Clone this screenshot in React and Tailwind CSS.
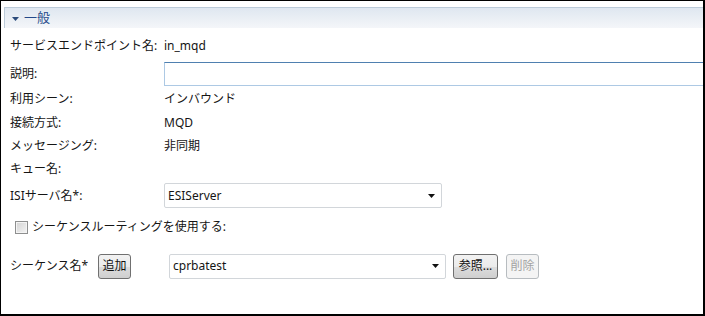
const font = { fontFamily: '"Noto Sans", "Noto Sans CJK JP", sans-serif' };

function Arrow() {
  return (
    <svg width="7" height="4" viewBox="0 0 7 4" className="shrink-0">
      <path d="M0 0h7L3.5 4z" fill="#111" />
    </svg>
  );
}

function Combo({ value, className }) {
  return (
    <div className={`flex items-center justify-between rounded-[2px] border border-[#d2d6da] bg-white pl-[3px] pr-[6px] ${className}`}>
      <span>{value}</span>
      <Arrow />
    </div>
  );
}

function Button({ children, disabled, className = '' }) {
  return (
    <button
      disabled={disabled}
      className={`flex h-[25px] items-center justify-center rounded-[3px] border text-[12px] leading-none ${
        disabled
          ? 'border-[#b7bcc0] bg-[#f4f4f4] text-[#a3a3a3]'
          : 'border-[#707070] bg-[linear-gradient(#f2f2f2_0%,#ebebeb_50%,#dddddd_51%,#cfcfcf_100%)] text-[#111]'
      } ${className}`}
    >
      {children}
    </button>
  );
}

function Row({ label, children, className = '' }) {
  return (
    <div className={`flex items-center ${className}`}>
      <span className="w-[154px] shrink-0">{label}</span>
      {children}
    </div>
  );
}

export default function App() {
  return (
    <div style={font} className="h-[316px] w-[705px] overflow-hidden border-l border-t border-b-2 border-r-2 border-black bg-white text-[12px] text-[#151515]">
      <div className="ml-[3px] mt-[6px] flex h-[21px] items-center border-l border-t border-[#bccbd9] bg-gradient-to-b from-[#dfe7f0] to-[#f4f6f9]">
        <svg width="7" height="4" viewBox="0 0 7 4" className="ml-[7px] mt-[2px]">
          <path d="M0 0h7L3.5 4z" fill="#2b4b7b" />
        </svg>
        <span className="ml-[5px] text-[13px] text-[#23498a]">一般</span>
      </div>

      <div className="pl-[9px]">
        <Row label="サービスエンドポイント名:" className="mt-[6px] h-[24px]">
          <span>in_mqd</span>
        </Row>
        <Row label="説明:" className="mt-[4px] h-[24px]">
          <div className="-mr-[8px] h-[24px] flex-1 border border-[#adc9e4] border-t-[#4f80b0] bg-white" />
        </Row>
        <Row label="利用シーン:" className="mt-[1px] h-[24px]">
          <span>インバウンド</span>
        </Row>
        <Row label="接続方式:" className="h-[23px]">
          <span>MQD</span>
        </Row>
        <Row label="メッセージング:" className="h-[23px]">
          <span>非同期</span>
        </Row>
        <Row label="キュー名:" className="h-[24px]">
          <span />
        </Row>
        <Row label="ISIサーバ名*:" className="mt-[2px] h-[25px]">
          <Combo value="ESIServer" className="h-[25px] w-[278px]" />
        </Row>

        <div className="ml-[5px] mt-[7px] flex h-[24px] items-center gap-[4px]">
          <span className="h-[13px] w-[13px] border border-[#8e8f8f] bg-gradient-to-br from-[#d3d3d3] to-[#f4f4f4] shadow-[inset_0_0_0_1px_#f4f4f4]" />
          <span>シーケンスルーティングを使用する:</span>
        </div>

        <div className="mt-[14px] flex h-[26px] items-center">
          <span className="w-[88px] shrink-0">シーケンス名*</span>
          <Button className="w-[33px]">追加</Button>
          <Combo value="cprbatest" className="ml-[38px] h-[25px] w-[277px]" />
          <Button className="ml-[7px] w-[45px]">参照...</Button>
          <Button disabled className="ml-[8px] w-[33px]">削除</Button>
        </div>
      </div>
    </div>
  );
}
